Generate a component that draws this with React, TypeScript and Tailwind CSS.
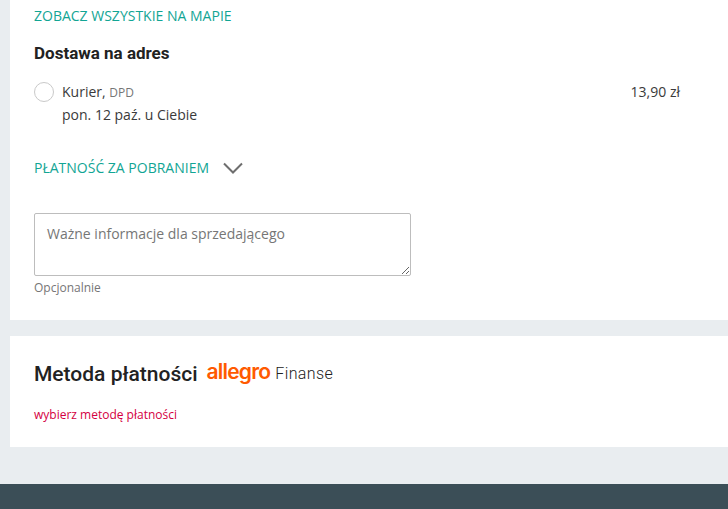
const openSans = { fontFamily: '"Open Sans", sans-serif' };

function DeliverySection() {
  return (
    <section className="ml-[10px] h-[320px] bg-white px-6 font-['Open_Sans',sans-serif] text-[#3a3a3a]">
      <a className="block pt-[7px] text-sm leading-[18px] text-[#12a594]">ZOBACZ WSZYSTKIE NA MAPIE</a>
      <h3 className="mt-4 font-['Roboto',sans-serif] text-[17px] leading-[24px] font-bold text-[#222]">Dostawa na adres</h3>

      <div className="mt-[15px] flex items-start justify-between pr-[24px]">
        <div className="flex items-start">
          <span className="mt-[2px] h-5 w-5 rounded-full border border-[#c9c9c9] bg-white" />
          <div className="ml-[8px] text-sm leading-[23px]">
            <p>
              Kurier, <span className="text-xs text-[#767676]">DPD</span>
            </p>
            <p>pon. 12 paź. u Ciebie</p>
          </div>
        </div>
        <span className="text-sm leading-[23px]">13,90 zł</span>
      </div>

      <div className="mt-[33px] flex items-center">
        <a className="text-sm leading-[18px] text-[#12a594]">PŁATNOŚĆ ZA POBRANIEM</a>
        <svg width="20" height="12" viewBox="0 0 20 12" fill="none" className="ml-[14px] text-[#6e6e6e]">
          <path d="M1 1.5 10 10.5 19 1.5" stroke="currentColor" strokeWidth="2" />
        </svg>
      </div>

      <textarea
        className="mt-9 block h-[63px] w-[377px] rounded-[2px] border border-[#bdbdbd] px-3 py-2 text-sm leading-[24px] placeholder:text-[#767676]"
        style={openSans}
        placeholder="Ważne informacje dla sprzedającego"
      />
      <p className="mt-[3px] text-xs leading-[18px] text-[#767676]">Opcjonalnie</p>
    </section>
  );
}

function PaymentSection() {
  return (
    <section className="mt-4 ml-[10px] h-[111px] bg-white px-6">
      <div className="flex items-center pt-[22px]">
        <h2 className="font-['Roboto',sans-serif] text-[21px] leading-[32px] font-medium text-[#222]">Metoda płatności</h2>
        <span className="ml-[9px] -translate-y-[2px] font-['Inter',sans-serif] text-[21px] leading-[32px] font-semibold tracking-[-0.8px] text-[#ff5a00]">
          allegro
        </span>
        <span className="ml-[5px] font-['Roboto',sans-serif] text-base leading-[32px] font-light tracking-[0.4px] text-[#222]">
          Finanse
        </span>
      </div>
      <p className="mt-[16px] font-['Open_Sans',sans-serif] text-xs leading-[18px] text-[#d4003f]">wybierz metodę płatności</p>
    </section>
  );
}

export default function App() {
  return (
    <div className="h-[509px] w-[728px] overflow-hidden bg-[#e9edf0]">
      <DeliverySection />
      <PaymentSection />
      <footer className="mt-[37px] h-[25px] bg-[#3b4e57]" />
    </div>
  );
}
